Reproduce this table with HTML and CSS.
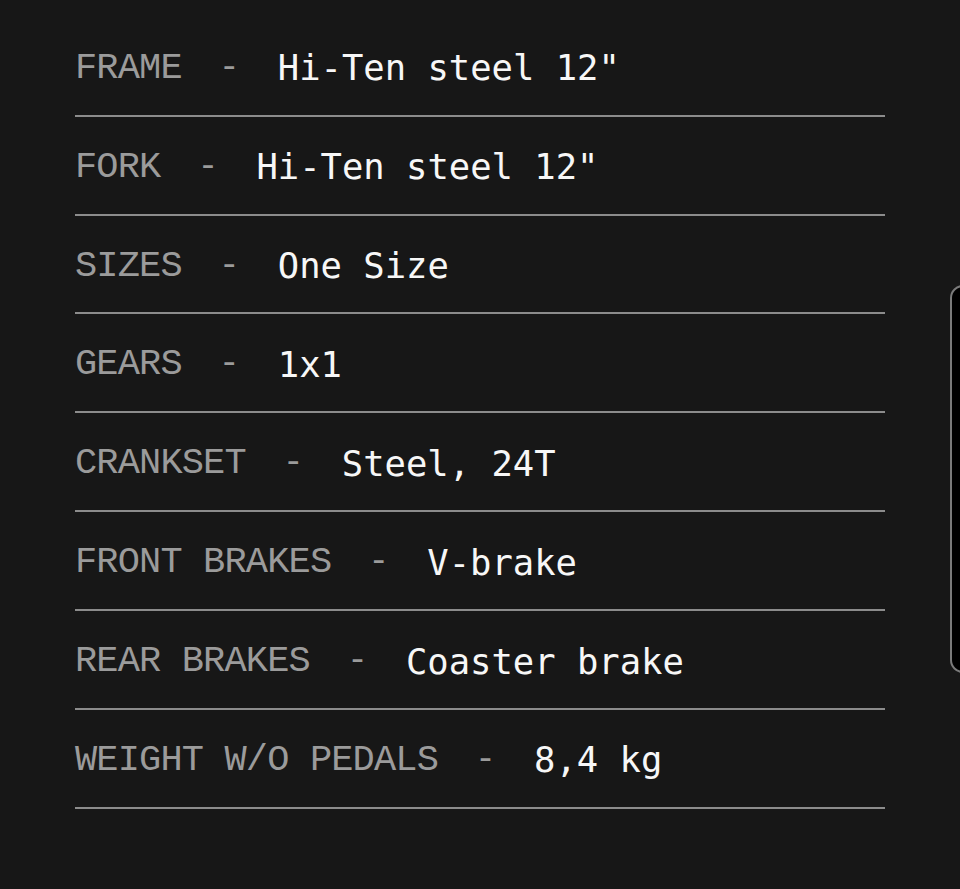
FILE: index.html
```html
<!DOCTYPE html>
<html>
<head>
<meta charset="utf-8">
<link rel="stylesheet" href="styles.css">
</head>
<body>
<div class="specs">
  <div class="row"><span class="label">FRAME</span><span class="sep">-</span><span class="value">Hi-Ten steel 12"</span></div>
  <div class="row"><span class="label">FORK</span><span class="sep">-</span><span class="value">Hi-Ten steel 12"</span></div>
  <div class="row"><span class="label">SIZES</span><span class="sep">-</span><span class="value">One Size</span></div>
  <div class="row"><span class="label">GEARS</span><span class="sep">-</span><span class="value">1x1</span></div>
  <div class="row"><span class="label">CRANKSET</span><span class="sep">-</span><span class="value">Steel, 24T</span></div>
  <div class="row"><span class="label">FRONT BRAKES</span><span class="sep">-</span><span class="value">V-brake</span></div>
  <div class="row"><span class="label">REAR BRAKES</span><span class="sep">-</span><span class="value">Coaster brake</span></div>
  <div class="row"><span class="label">WEIGHT W/O PEDALS</span><span class="sep">-</span><span class="value">8,4 kg</span></div>
</div>
<div class="side-tab"></div>
</body>
</html>
```
FILE: styles.css
```css
html, body {
  margin: 0;
  padding: 0;
  background: #171717;
  width: 960px;
  height: 889px;
  overflow: hidden;
}
body {
  position: relative;
}
.specs {
  padding: 17.8px 0 0 75px;
  width: 810px;
}
.row {
  box-sizing: border-box;
  height: 98.9px;
  display: flex;
  align-items: center;
  border-bottom: 2px solid #8c8c8c;
  padding-top: 3px;
}
.label {
  font-family: "Liberation Mono", monospace;
  font-size: 37px;
  letter-spacing: -0.85px;
  color: #9b9b9b;
  white-space: pre;
}
.sep {
  font-family: "Liberation Mono", monospace;
  font-size: 35px;
  color: #9b9b9b;
  margin: 0 38px 0 37px;
}
.value {
  font-family: "DejaVu Sans Mono", monospace;
  font-size: 35.5px;
  color: #f7f7f7;
  white-space: pre;
}
.side-tab {
  position: absolute;
  left: 950px;
  top: 285px;
  width: 40px;
  height: 384px;
  background: #000;
  border: 2px solid #7a7a7a;
  border-radius: 13px;
}
```
